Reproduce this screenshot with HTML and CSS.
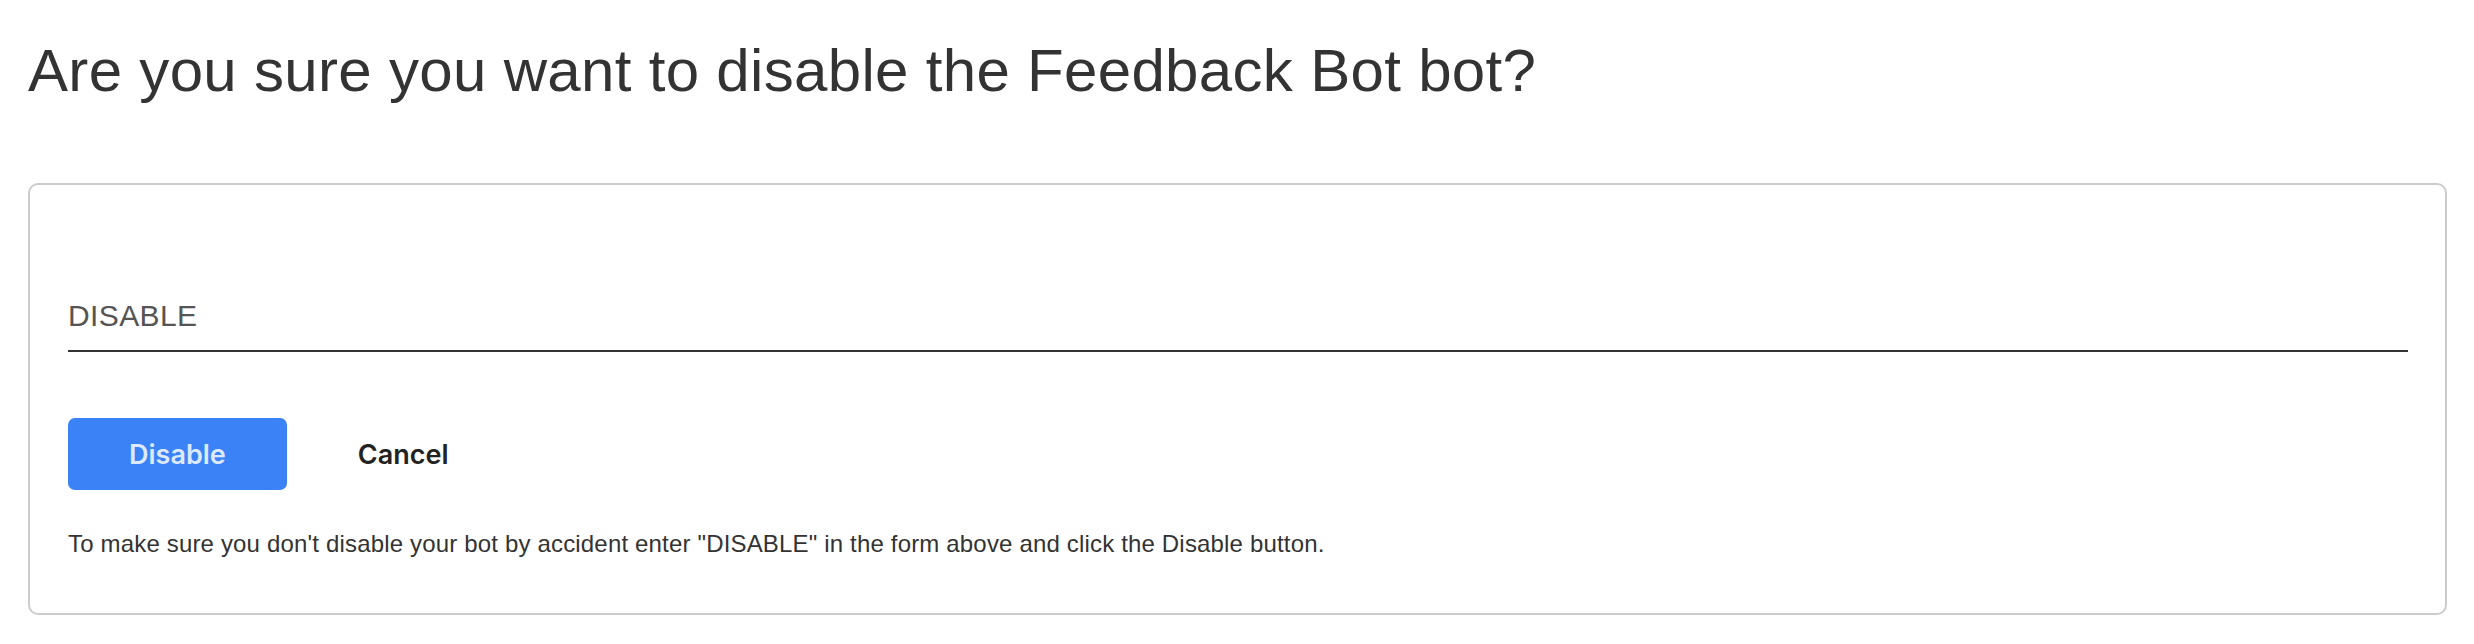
FILE: index.html
```html
<!DOCTYPE html>
<html lang="en">
<head>
<meta charset="utf-8">
<title>Disable bot</title>
<link rel="stylesheet" href="styles.css">
</head>
<body>
  <h1 class="page-title">Are you sure you want to disable the Feedback Bot bot?</h1>
  <form class="card">
    <input class="confirm-input" type="text" value="DISABLE" aria-label="Type DISABLE to confirm">
    <div class="actions">
      <button type="button" class="btn btn-primary">Disable</button>
      <button type="button" class="btn btn-link">Cancel</button>
    </div>
    <p class="help">To make sure you don't disable your bot by accident enter "DISABLE" in the form above and click the Disable button.</p>
  </form>
</body>
</html>
```
FILE: styles.css
```css
html, body {
  margin: 0;
  padding: 0;
  background: #ffffff;
}

body {
  font-family: "Liberation Sans", Arial, Helvetica, sans-serif;
  color: #333333;
}

.page-title {
  margin: 36px 0 0 28px;
  font-size: 60px;
  line-height: 69px;
  font-weight: 400;
  letter-spacing: 0.32px;
  color: #333333;
}

.card {
  margin: 78px 27px 0 28px;
  border: 2px solid #cccccc;
  border-radius: 10px;
  padding: 114px 37px 55px 38px;
}

.confirm-input {
  display: block;
  box-sizing: content-box;
  width: 100%;
  height: 34px;
  margin: 0;
  padding: 0 0 17px 0;
  border: none;
  border-bottom: 2px solid #333333;
  outline: none;
  background: transparent;
  font-family: "Liberation Sans", Arial, Helvetica, sans-serif;
  font-size: 30px;
  line-height: 34px;
  letter-spacing: 0.4px;
  color: #555555;
}

.actions {
  display: flex;
  align-items: center;
  gap: 71px;
  margin-top: 66px;
}

.btn {
  font-family: Inter, "Liberation Sans", Arial, sans-serif;
  font-size: 27px;
  font-weight: 600;
  border: none;
  cursor: pointer;
  margin: 0;
}

.btn-primary {
  height: 72px;
  padding: 0 61px;
  background: #3b82f6;
  color: #dde9fd;
  border-radius: 7px;
}

.btn-link {
  padding: 0;
  background: transparent;
  color: #222222;
}

.help {
  margin: 40px 0 0 0;
  font-size: 24px;
  line-height: 28px;
  letter-spacing: 0.17px;
  color: #333333;
}
```
